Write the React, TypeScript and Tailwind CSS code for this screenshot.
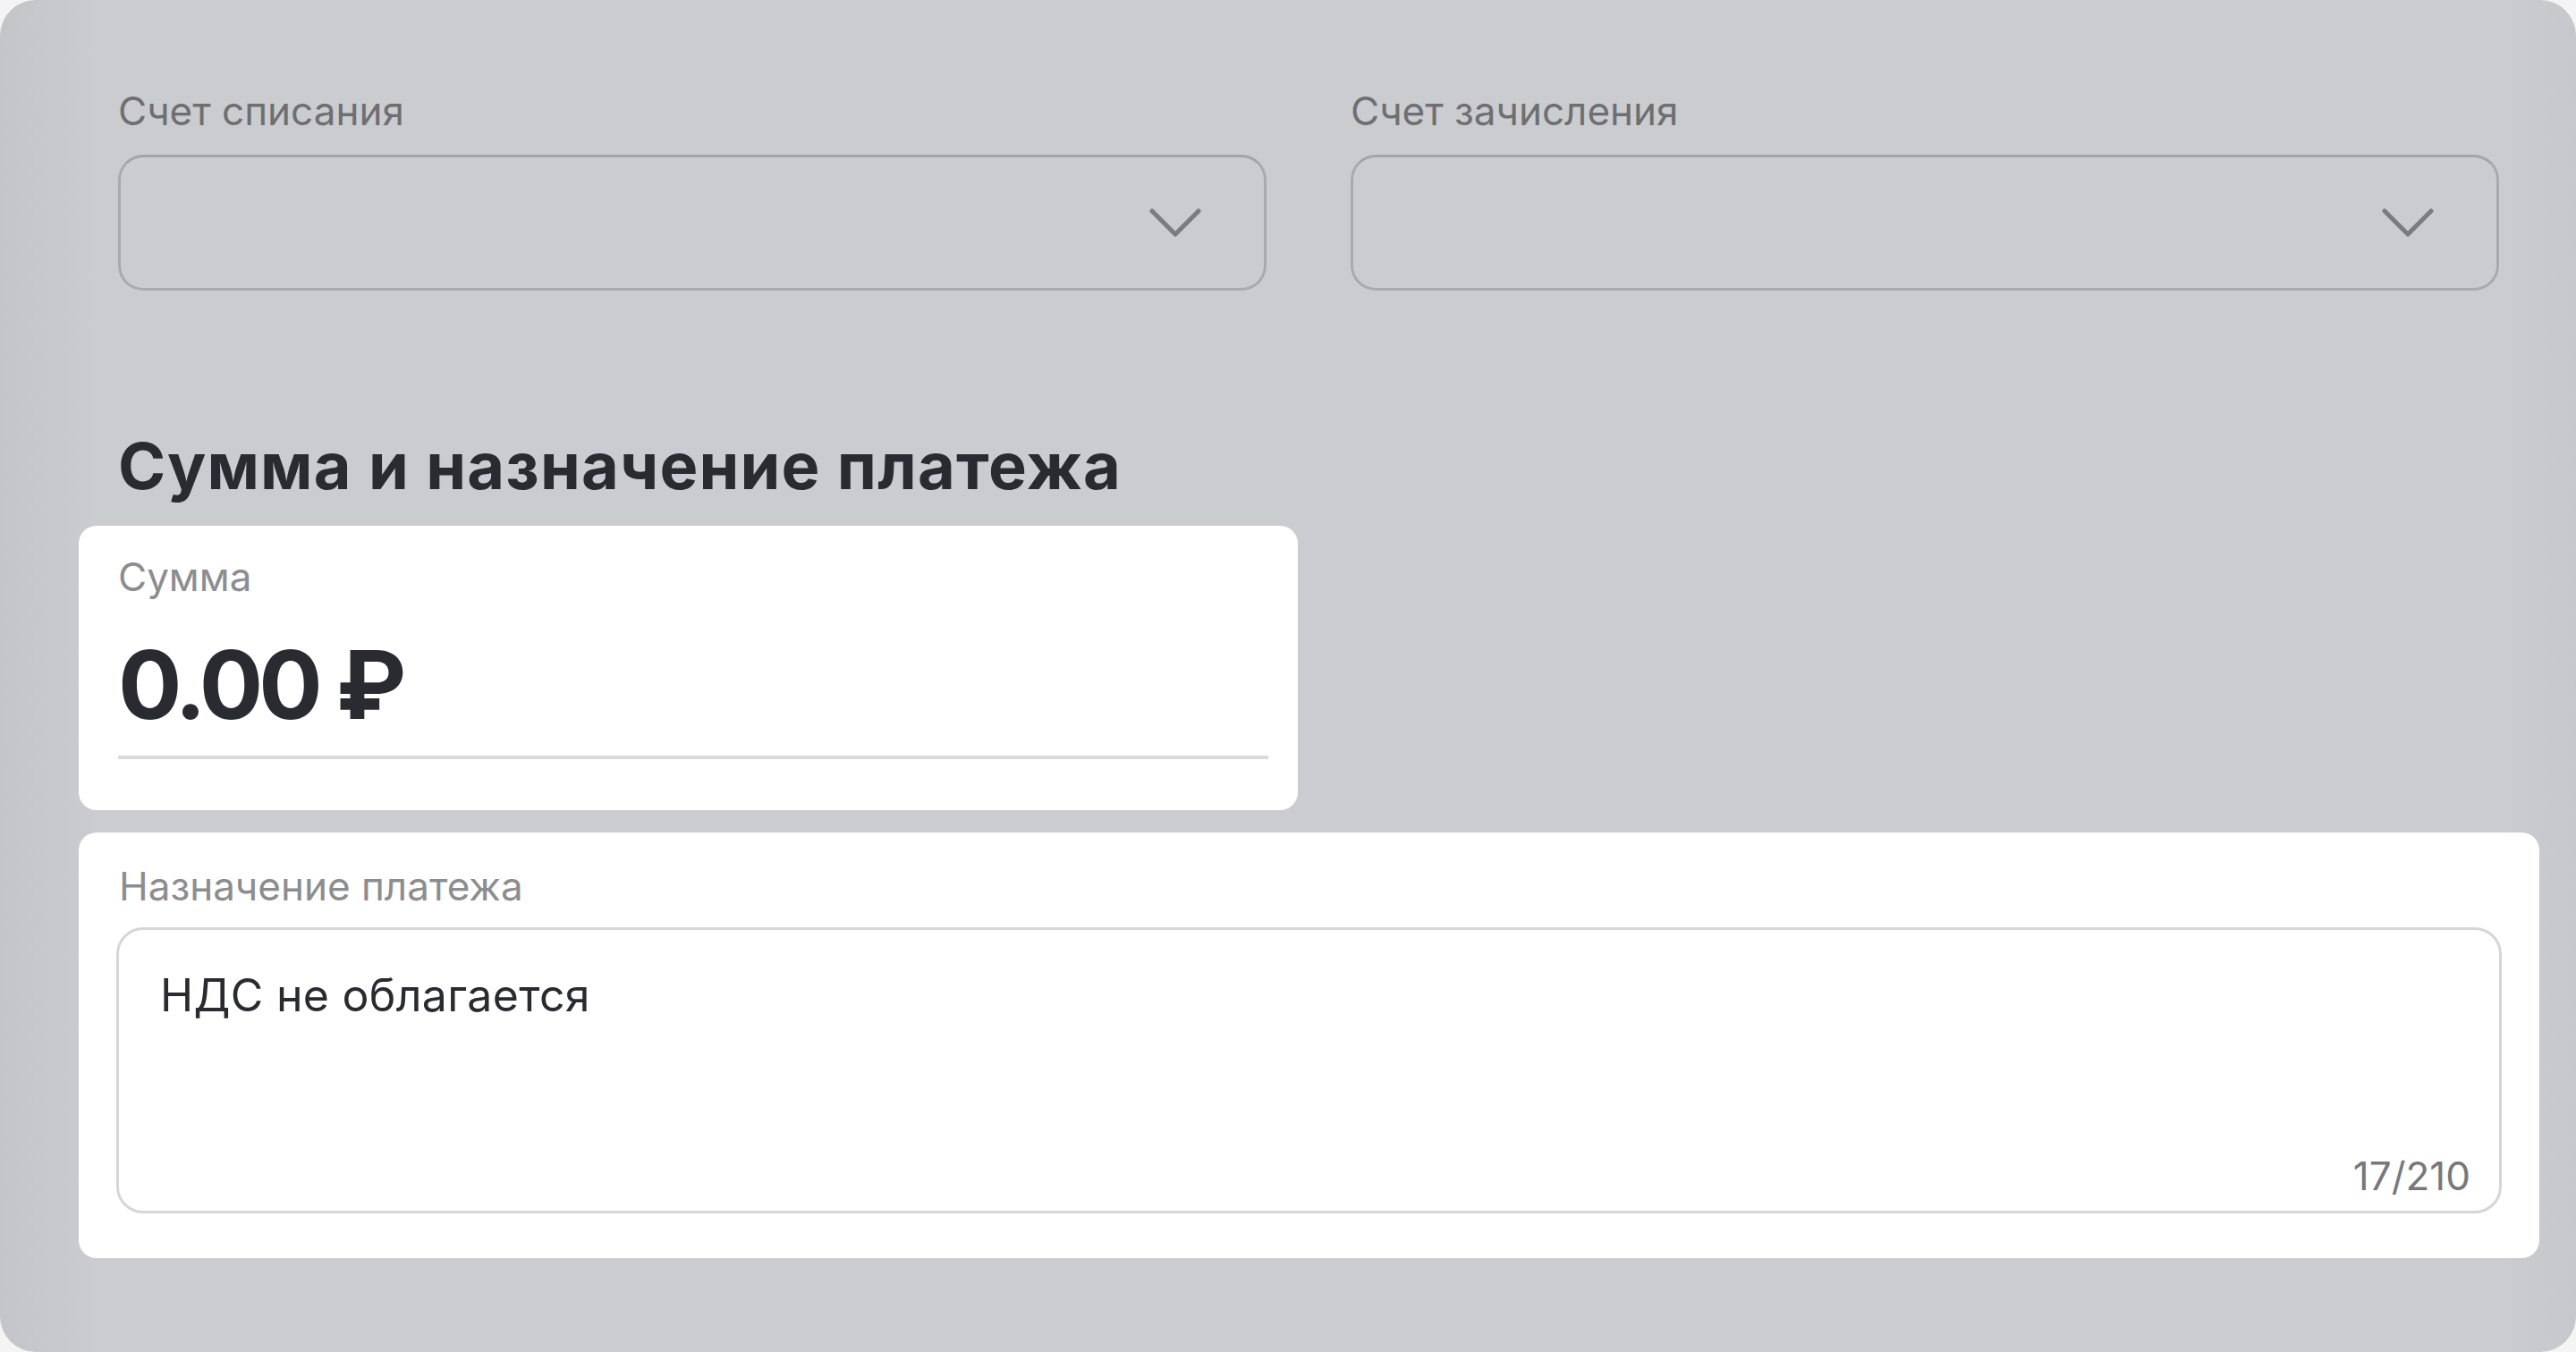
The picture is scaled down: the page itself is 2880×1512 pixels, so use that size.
import { useState } from "react";

function Chevron() {
  return (
    <svg width="58" height="33" viewBox="0 0 58 33" fill="none" aria-hidden="true">
      <path d="M3 3L29 29L55 3" stroke="#7b7c7f" strokeWidth="5" strokeLinecap="round" strokeLinejoin="round" />
    </svg>
  );
}

function AccountSelect({ label }: { label: string }) {
  return (
    <div className="flex flex-col">
      <span className="mt-[2px] text-[44px] leading-[53px] text-[#6e6f72]">{label}</span>
      <button className="mt-[22px] flex h-[152px] w-full items-center justify-end rounded-[28px] border-[3px] border-[#a9aaad] border-t-[#a3a4a7] pr-[70px]">
        <Chevron />
      </button>
    </div>
  );
}

export default function App() {
  const [purpose] = useState("НДС не облагается");

  return (
    <div className="h-[1512px] w-full bg-[#f4f4f5] font-['Inter','Noto_Sans',sans-serif]">
      <div className="h-full rounded-[40px] bg-[linear-gradient(to_right,#c4c5c8_0px,#cbcccf_110px,#cbcccf_97%,#c7c8cb_100%)] pl-[88px] pt-[96px]">
        <div className="ml-[44px] grid w-[2662px] grid-cols-2 gap-[94px]">
          <AccountSelect label="Счет списания" />
          <AccountSelect label="Счет зачисления" />
        </div>

        <h2 className="ml-[44px] mt-[152px] text-[72px] font-bold leading-[88px] tracking-[1.2px] text-[#2a2b30]">
          Сумма и назначение платежа
        </h2>

        {/* сумма */}
        <div className="mt-[23px] w-[1363px] rounded-[20px] bg-white pb-[57px] pl-[44px] pt-[31px]">
          <p className="text-[44px] leading-[53px] text-[#8c8d90]">Сумма</p>
          <p className="mt-[30px] text-[106px] font-bold leading-[128px] tracking-[-5px] text-[#2a2b30]">0.00 ₽</p>
          <div className="mt-[15px] h-[4px] w-[1286px] bg-[#dadadb]" />
        </div>

        {/* назначение */}
        <div className="mt-[25px] w-[2751px] rounded-[20px] bg-white px-[42px] pb-[50px] pt-[34px]">
          <p className="pl-[3px] text-[44px] leading-[53px] text-[#8c8d90]">Назначение платежа</p>
          <div className="mt-[19px] flex h-[320px] flex-col justify-between rounded-[30px] border-[3px] border-[#d6d6d7] pb-[12px] pl-[46px] pr-[32px] pt-[43px]">
            <p className="text-[50px] leading-[60px] tracking-[0.3px] text-[#2a2b30]">{purpose}</p>
            <span className="self-end text-[44px] leading-[53px] text-[#77787b]">{purpose.length}/210</span>
          </div>
        </div>
      </div>
    </div>
  );
}
